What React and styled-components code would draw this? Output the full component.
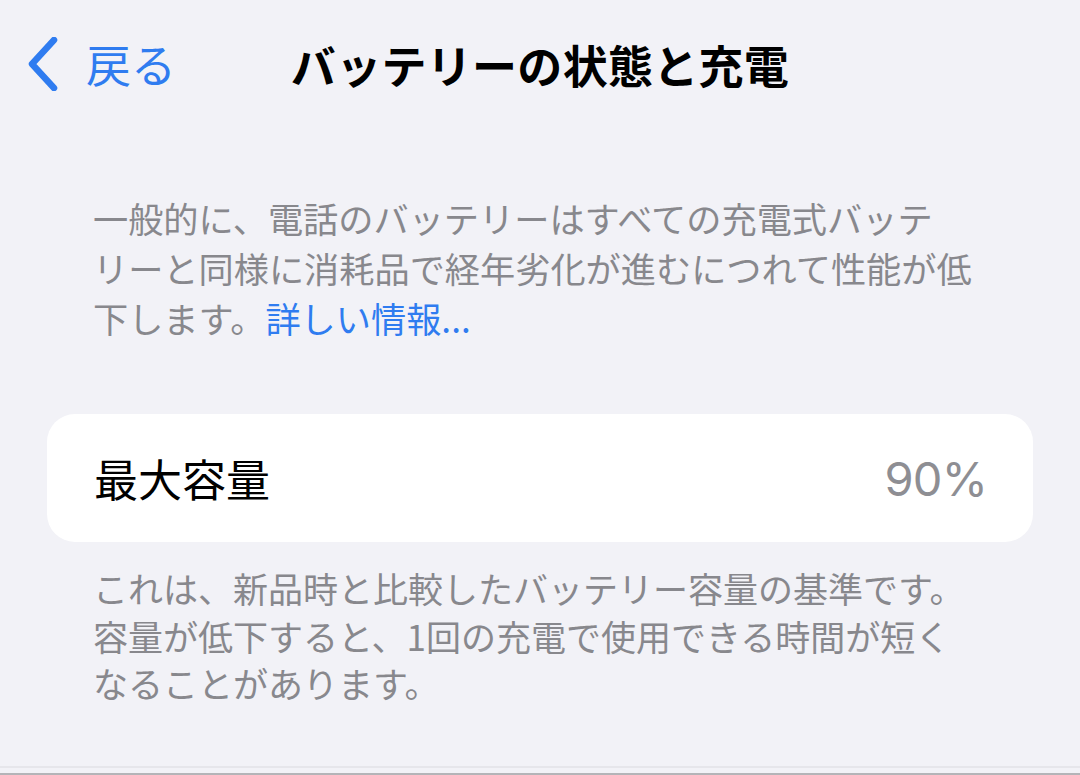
import React from 'react'
import styled, {createGlobalStyle} from 'styled-components'

const GlobalStyle = createGlobalStyle`
    html, body {
        margin: 0;
        padding: 0;
        background: #f2f2f7;
    }
    body {
        font-family: "Noto Sans CJK JP", "Noto Sans", sans-serif;
        -webkit-font-smoothing: antialiased;
    }
`

const Page = styled.div`
    width: 1080px;
    height: 775px;
    overflow: hidden;
    display: flex;
    flex-direction: column;
    background: #f2f2f7;
`

const NavBar = styled.header`
    display: grid;
    grid-template-columns: 1fr auto 1fr;
    align-items: center;
    height: 88px;
    margin-top: 20px;
`

const BackButton = styled.a`
    display: flex;
    align-items: center;
    gap: 27px;
    padding-left: 27px;
    color: #2f7cf0;
    font-size: 45px;
    line-height: 1;
    cursor: pointer;
`

const BackLabel = styled.span`
    position: relative;
    top: -1px;
`

const Title = styled.h1`
    margin: 0;
    font-size: 45px;
    font-weight: 700;
    line-height: 1;
    color: #000;
    letter-spacing: 0.3px;
`

const Content = styled.main`
    padding: 0 47px;
    display: flex;
    flex-direction: column;
`

const Note = styled.p`
    margin: ${p => p.$top}px 0 0;
    padding: 0 46px;
    font-size: ${p => p.$size}px;
    line-height: ${p => p.$lh}px;
    color: #88888d;
    white-space: nowrap;
`

const Link = styled.a`
    color: #2f7cf0;
`

const Card = styled.section`
    margin-top: 71px;
    height: 128px;
    background: #fff;
    border-radius: 28px;
    display: flex;
    align-items: center;
    justify-content: space-between;
    padding: 0 46px 0 47px;
`

const RowLabel = styled.span`
    font-size: 44px;
    color: #000;
    line-height: 1;
`

const RowValue = styled.span`
    font-family: Inter, "Noto Sans", sans-serif;
    font-size: 47px;
    color: #8e8e93;
    line-height: 1;
    letter-spacing: -0.8px;
`

const Spacer = styled.div`
    flex: 1;
`

const BottomEdge = styled.div`
    height: 5px;
    border-top: 2px solid #e6e6eb;
    border-bottom: 2px solid #b4b4b8;
    background: #f2f2f7;
`

const Chevron = () => (
    <svg width="32" height="54" viewBox="0 0 32 54" fill="none">
        <path d="M27 3 L5 27 L27 51" stroke="#2f7cf0" strokeWidth="6.5" strokeLinecap="round" strokeLinejoin="round"/>
    </svg>
)

const App = () => {
    return (
        <Page>
            <GlobalStyle/>
            <NavBar>
                <BackButton>
                    <Chevron/>
                    <BackLabel>戻る</BackLabel>
                </BackButton>
                <Title>バッテリーの状態と充電</Title>
                <div/>
            </NavBar>
            <Content>
                <Note $top={85} $size={35.2} $lh={50}>
                    一般的に、電話のバッテリーはすべての充電式バッテ<br/>
                    リーと同様に消耗品で経年劣化が進むにつれて性能が低<br/>
                    下します。<Link>詳しい情報...</Link>
                </Note>
                <Card>
                    <RowLabel>最大容量</RowLabel>
                    <RowValue>90%</RowValue>
                </Card>
                <Note $top={22} $size={35} $lh={47.5}>
                    これは、新品時と比較したバッテリー容量の基準です。<br/>
                    容量が低下すると、1回の充電で使用できる時間が短く<br/>
                    なることがあります。
                </Note>
            </Content>
            <Spacer/>
            <BottomEdge/>
        </Page>
    )
}

export default App
